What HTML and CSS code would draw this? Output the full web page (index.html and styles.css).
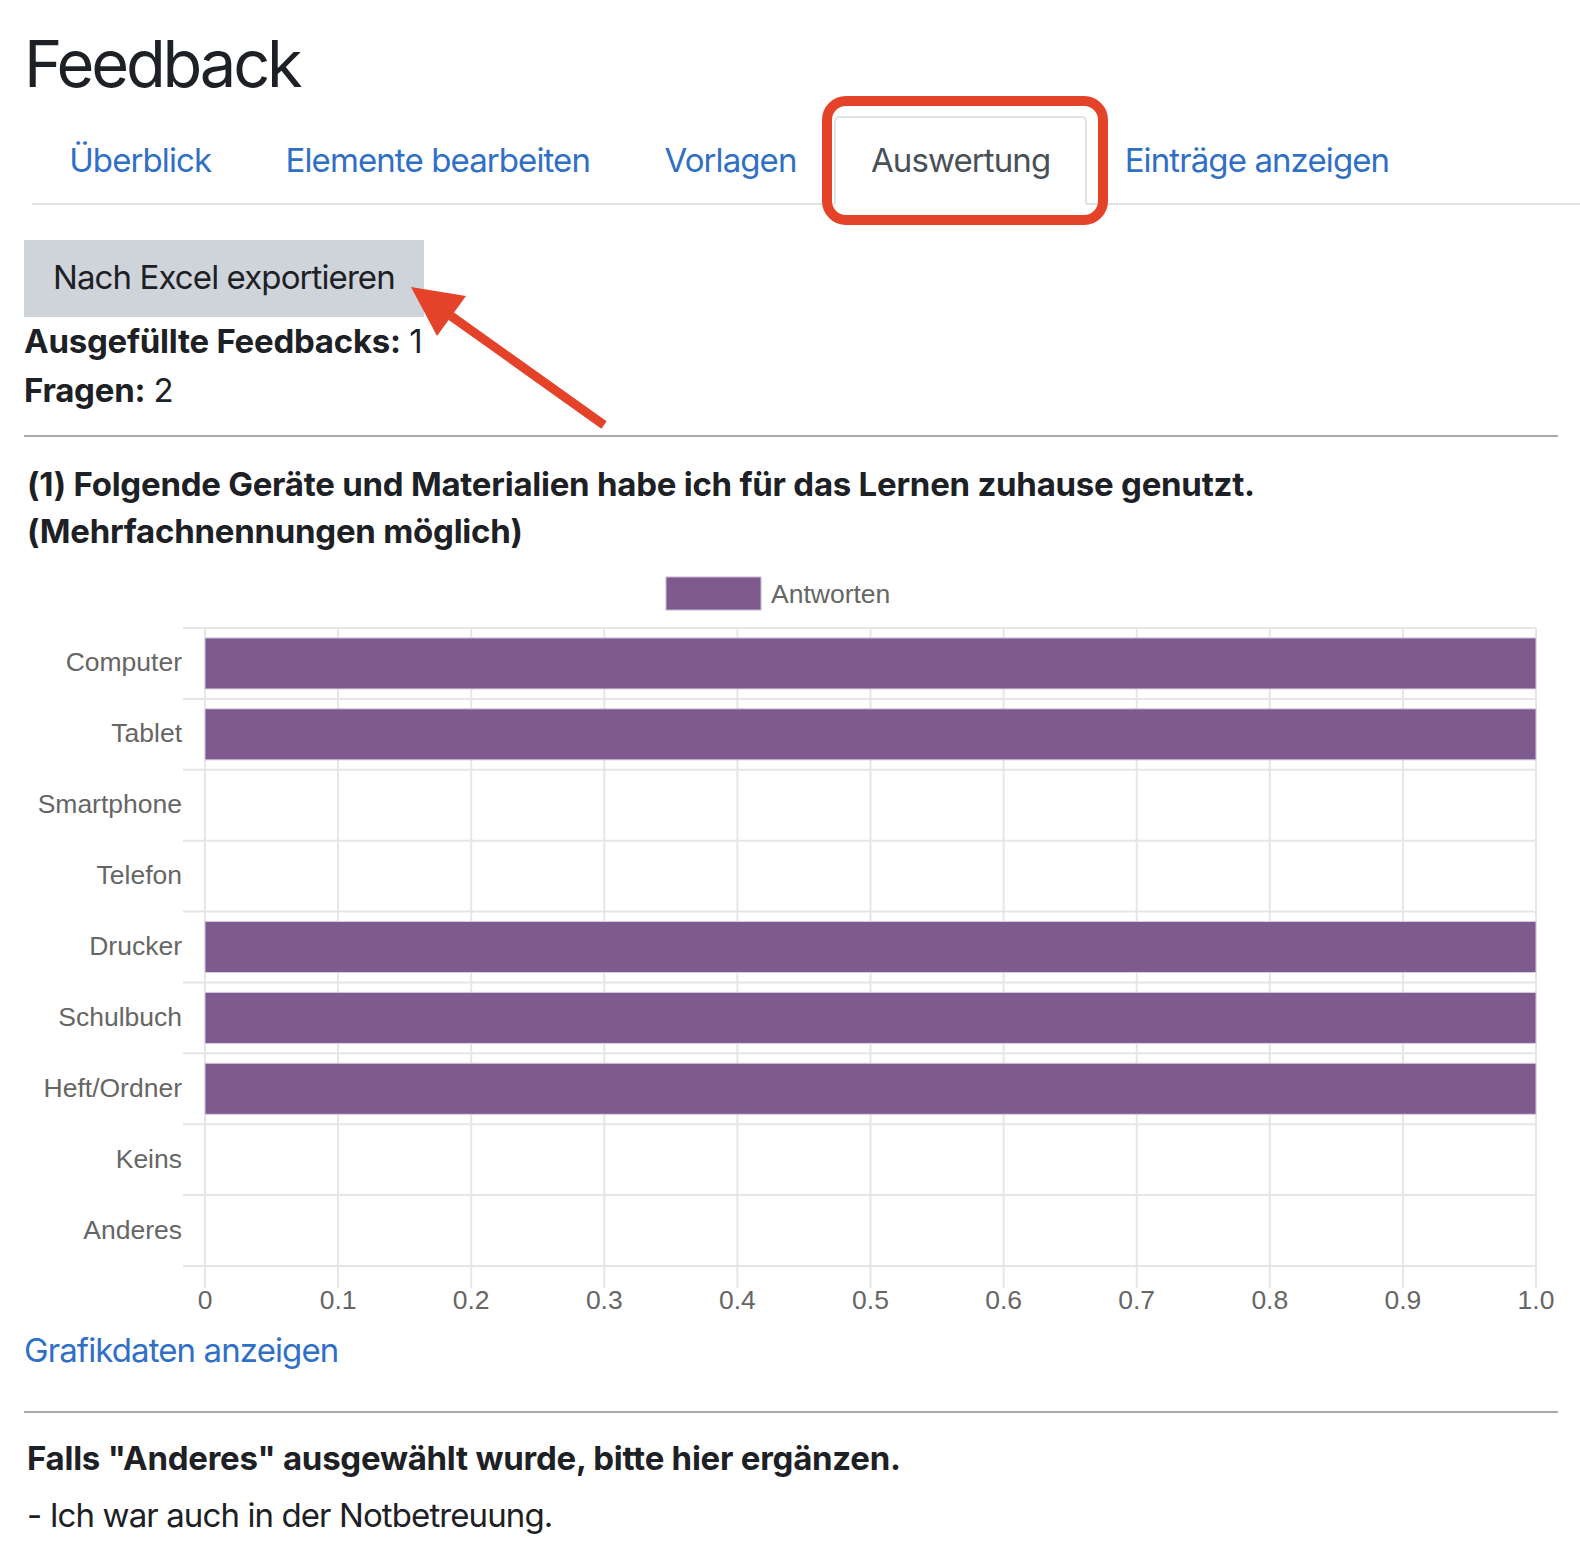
FILE: index.html
```html
<!DOCTYPE html>
<html lang="de">
<head>
  <meta charset="UTF-8">
  <title>Feedback - Auswertung</title>
  <link rel="stylesheet" href="styles.css">
</head>
<body>

  <h2 class="page-title">Feedback</h2>

  <ul class="nav-tabs">
    <li><a href="#">Überblick</a></li>
    <li><a href="#">Elemente bearbeiten</a></li>
    <li><a href="#">Vorlagen</a></li>
    <li class="active"><a href="#">Auswertung</a><span class="mark-box"></span></li>
    <li><a href="#">Einträge anzeigen</a></li>
  </ul>

  <button class="btn-export">Nach Excel exportieren</button>

  <div class="summary">
    <div><b>Ausgefüllte Feedbacks:</b> 1</div>
    <div><b>Fragen:</b> 2</div>
  </div>

  <!-- annotation arrow pointing at the export button -->
  <svg class="mark-arrow" width="220" height="170" viewBox="0 0 220 170">
    <line x1="51" y1="46" x2="204" y2="155" stroke="#e5422a" stroke-width="9"/>
    <polygon points="11,17 66,26 37,66" fill="#e5422a"/>
  </svg>

  <hr class="sep">

  <h4 class="question">(1) Folgende Geräte und Materialien habe ich für das Lernen zuhause genutzt.<br>(Mehrfachnennungen möglich)</h4>

  <svg class="chart" id="chart" width="1534" height="760" viewBox="0 0 1534 760"></svg>

  <a class="chart-link" href="#">Grafikdaten anzeigen</a>

  <hr class="sep sep-low">

  <h4 class="question question-other">Falls "Anderes" ausgewählt wurde, bitte hier ergänzen.</h4>
  <p class="answer">- Ich war auch in der Notbetreuung.</p>

  <script>
    function drawChart() {
      var labels = ["Computer", "Tablet", "Smartphone", "Telefon", "Drucker", "Schulbuch", "Heft/Ordner", "Keins", "Anderes"];
      var values = [1, 1, 0, 0, 1, 1, 1, 0, 0];

      var svg = document.getElementById("chart");
      var plotLeft = 181, plotRight = 1512, plotTop = 67, plotBottom = 705;
      var rowH = (plotBottom - plotTop) / labels.length;
      var colW = (plotRight - plotLeft) / 10;
      var out = "";

      // legend
      out += "<rect class='legend-box' x='642' y='16' width='95' height='33'/>";
      out += "<text class='legend-text' x='747' y='42'>Antworten</text>";

      // grid
      for (var i = 0; i <= 10; i++) {
        var x = plotLeft + i * colW;
        out += "<line class='grid' x1='" + x + "' y1='" + plotTop + "' x2='" + x + "' y2='" + (plotBottom + 22) + "'/>";
        var tick = i == 0 ? "0" : (i == 10 ? "1.0" : "0." + i);
        out += "<text class='tick' x='" + x + "' y='748' text-anchor='middle'>" + tick + "</text>";
      }
      for (var j = 0; j <= labels.length; j++) {
        var y = plotTop + j * rowH;
        out += "<line class='grid' x1='" + (plotLeft - 22) + "' y1='" + y + "' x2='" + plotRight + "' y2='" + y + "'/>";
      }

      // bars and labels
      var barH = rowH * 0.72;
      for (var k = 0; k < labels.length; k++) {
        var rowTop = plotTop + k * rowH;
        if (values[k] > 0) {
          out += "<rect class='bar' x='" + plotLeft + "' y='" + (rowTop + (rowH - barH) / 2) + "' width='" + ((plotRight - plotLeft) * values[k]) + "' height='" + barH + "'/>";
        }
        out += "<text class='tick' x='158' y='" + (rowTop + rowH / 2 + 8) + "' text-anchor='end'>" + labels[k] + "</text>";
      }

      svg.innerHTML = out;
    }

    drawChart();
  </script>

</body>
</html>
```

FILE: styles.css
```css
body {
  font-family: Inter, "Noto Sans", sans-serif;
  font-size: 33px;
  line-height: 49.5px;
  letter-spacing: -0.9px;
  color: #1d2125;
  margin: 0;
  padding: 24px 22px 0 24px;
  position: relative;
}

a {
  color: #306fc6;
  text-decoration: none;
}

b {
  font-weight: 700;
  letter-spacing: -0.25px;
}

.page-title {
  font-size: 65px;
  font-weight: 400;
  line-height: 79px;
  letter-spacing: -3.2px;
  margin: 0;
}

.nav-tabs {
  list-style-type: none;
  display: flex;
  margin: 13px -22px 0 8px;
  padding: 0;
  border-bottom: 2px solid #dee2e6;
}

.nav-tabs li {
  position: relative;
  margin-bottom: -2px;
}

.nav-tabs a {
  display: block;
  padding: 17.6px 35.2px;
  border: 2px solid transparent;
  border-radius: 5px 5px 0 0;
}

.nav-tabs .active a {
  color: #495057;
  border-color: #dee2e6 #dee2e6 #fff;
  background-color: #fff;
}

/* red frame drawn over the active tab */
.mark-box {
  position: absolute;
  left: -12px;
  top: -20px;
  right: -21px;
  bottom: -20px;
  border: 10px solid #e5422a;
  border-radius: 24px;
}

.btn-export {
  display: block;
  margin-top: 35px;
  padding: 13.75px 29px;
  font-family: inherit;
  font-size: 33px;
  line-height: 49.5px;
  letter-spacing: -0.9px;
  color: #1d2125;
  background-color: #ced4da;
  border: none;
  border-radius: 0;
}

.mark-arrow {
  position: absolute;
  left: 400px;
  top: 270px;
}

.sep {
  border: none;
  border-top: 2px solid #a9a9a9;
  margin: 19px 0 0 0;
}

.sep-low {
  margin-top: 36px;
}

.question {
  font-size: 33px;
  line-height: 47px;
  font-weight: 700;
  letter-spacing: -0.25px;
  margin: 24px 0 0 3px;
}

.question-other {
  margin-top: 22px;
}

.chart {
  display: block;
  margin-top: 6px;
  letter-spacing: 0;
}

.chart .grid {
  stroke: #e6e6e6;
  stroke-width: 2;
}

.chart .bar {
  fill: #7f5a8f;
  stroke: #d9cde0;
  stroke-width: 1;
}

.chart .legend-box {
  fill: #7f5a8f;
  stroke: #c9b8d2;
  stroke-width: 1;
}

.chart .tick,
.chart .legend-text {
  font-family: "Liberation Sans", Arial, sans-serif;
  font-size: 26.5px;
  fill: #666;
}

.chart-link {
  display: block;
  margin-top: 5px;
}

.answer {
  margin: 9px 0 0 3px;
}
```
